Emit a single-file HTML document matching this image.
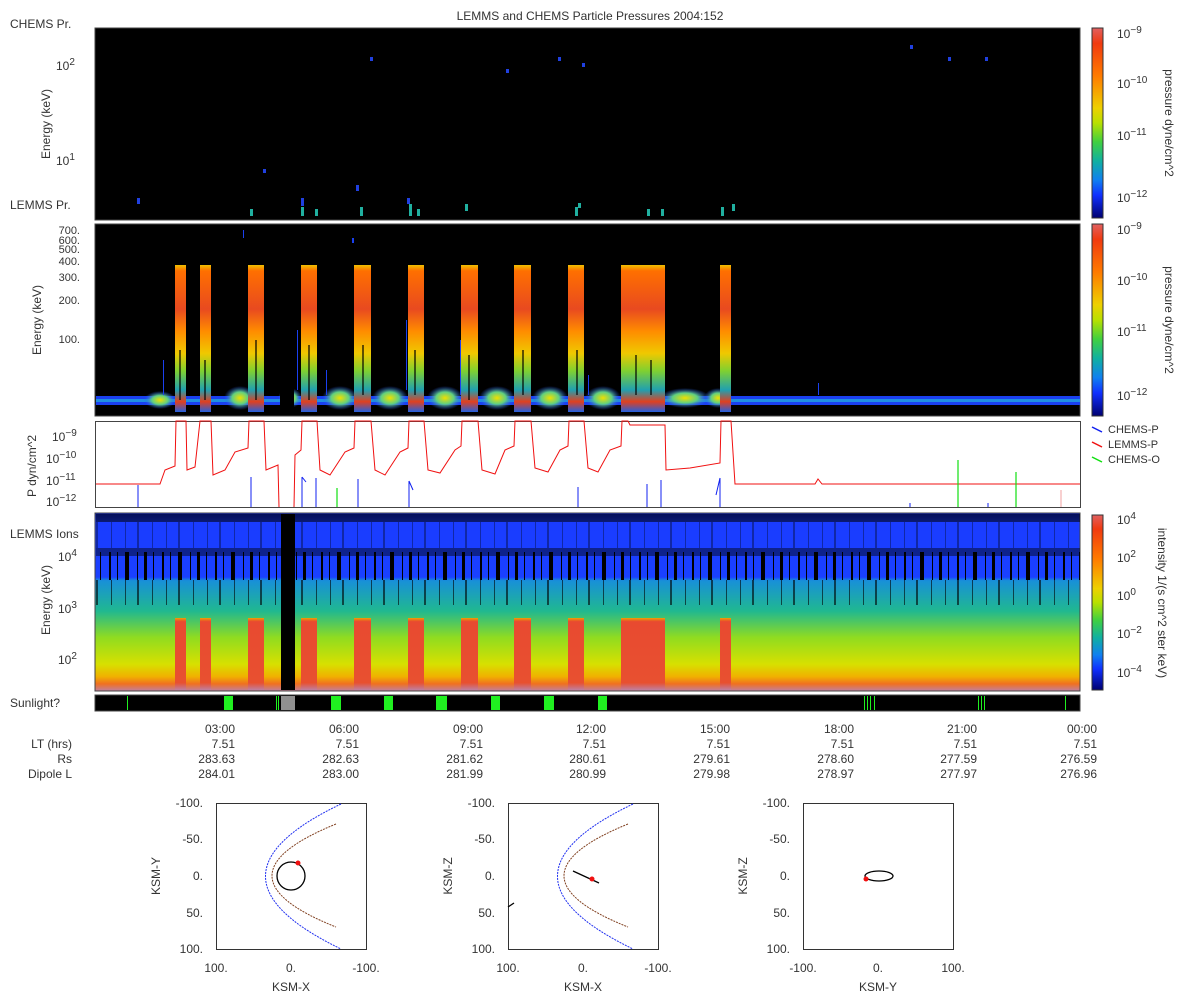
<!DOCTYPE html>
<html><head><meta charset="utf-8"><style>
html,body{margin:0;padding:0;background:#fff;width:1200px;height:1000px;overflow:hidden}
svg{display:block;font-family:"Liberation Sans",sans-serif;}
</style></head><body>
<svg width="1200" height="1000" viewBox="0 0 1200 1000" xmlns="http://www.w3.org/2000/svg">
<defs>
<linearGradient id="cb" x1="0" y1="0" x2="0" y2="1">
<stop offset="0" stop-color="#e06060"/><stop offset="0.08" stop-color="#f03a10"/>
<stop offset="0.25" stop-color="#ff7a00"/><stop offset="0.42" stop-color="#eed000"/>
<stop offset="0.5" stop-color="#b8e000"/><stop offset="0.6" stop-color="#40d040"/>
<stop offset="0.7" stop-color="#10b0a0"/><stop offset="0.8" stop-color="#1080f0"/>
<stop offset="0.88" stop-color="#1030ff"/><stop offset="1" stop-color="#000070"/>
</linearGradient>
<linearGradient id="burst" x1="0" y1="0" x2="0" y2="1">
<stop offset="0" stop-color="#f0c000"/><stop offset="0.04" stop-color="#ff7000"/>
<stop offset="0.3" stop-color="#e84a20"/><stop offset="0.45" stop-color="#ff8c00"/>
<stop offset="0.6" stop-color="#f0c800"/><stop offset="0.72" stop-color="#80d030"/>
<stop offset="0.85" stop-color="#20a0b0"/><stop offset="0.93" stop-color="#e04020"/>
<stop offset="1" stop-color="#2060e0"/>
</linearGradient>
<linearGradient id="p4" x1="0" y1="0" x2="0" y2="1">
<stop offset="0" stop-color="#0a20c0"/><stop offset="0.05" stop-color="#1a3cff"/>
<stop offset="0.36" stop-color="#1a40ff"/><stop offset="0.38" stop-color="#1890d8"/>
<stop offset="0.55" stop-color="#20b890"/><stop offset="0.7" stop-color="#90dc20"/>
<stop offset="0.85" stop-color="#d8e000"/><stop offset="0.92" stop-color="#f0b000"/>
<stop offset="0.96" stop-color="#f07020"/><stop offset="1" stop-color="#c080a0"/>
</linearGradient>
<linearGradient id="p4b" x1="0" y1="0" x2="0" y2="1">
<stop offset="0" stop-color="#f0a000"/><stop offset="0.05" stop-color="#e84a30"/>
<stop offset="0.9" stop-color="#e85030"/><stop offset="1" stop-color="#c080a0"/>
</linearGradient>
<radialGradient id="blob"><stop offset="0" stop-color="#f0e000"/><stop offset="0.5" stop-color="#60d080"/><stop offset="1" stop-color="#2050ff" stop-opacity="0"/></radialGradient>
<pattern id="streak" width="53" height="10" patternUnits="userSpaceOnUse">
<rect x="3" width="2" height="10" fill="#000"/><rect x="11" width="1" height="10" fill="#000"/><rect x="19" width="4" height="10" fill="#000"/><rect x="31" width="1" height="10" fill="#000"/><rect x="38" width="3" height="10" fill="#000"/><rect x="47" width="1" height="10" fill="#000"/>
</pattern>
<pattern id="streak2" width="41" height="10" patternUnits="userSpaceOnUse">
<rect x="2" width="1" height="10" fill="#000"/><rect x="14" width="2" height="10" fill="#000"/><rect x="29" width="1" height="10" fill="#000"/>
</pattern>
</defs>

<text x="590" y="20" font-size="12" text-anchor="middle" fill="#333">LEMMS and CHEMS Particle Pressures  2004:152</text>

<!-- Panel 1 -->
<rect x="95" y="28" width="985" height="192" fill="#000" stroke="#444"/>
<g fill="#2040e0">
<rect x="370" y="57" width="3" height="4"/><rect x="506" y="69" width="3" height="4"/><rect x="558" y="57" width="3" height="4"/><rect x="582" y="63" width="3" height="4"/><rect x="910" y="45" width="3" height="4"/><rect x="948" y="57" width="3" height="4"/><rect x="985" y="57" width="3" height="4"/><rect x="263" y="169" width="3" height="4"/><rect x="137" y="198" width="3" height="6"/><rect x="356" y="185" width="3" height="6"/><rect x="407" y="198" width="3" height="6"/><rect x="301" y="198" width="3" height="8"/>
</g>
<g fill="#20b0a0">
<rect x="250" y="209" width="3" height="7"/><rect x="301" y="207" width="3" height="9"/><rect x="315" y="209" width="3" height="7"/><rect x="360" y="207" width="3" height="9"/><rect x="409" y="204" width="3" height="12"/><rect x="417" y="209" width="3" height="7"/><rect x="465" y="204" width="3" height="7"/><rect x="575" y="207" width="3" height="9"/><rect x="647" y="209" width="3" height="7"/><rect x="661" y="209" width="3" height="7"/><rect x="721" y="207" width="3" height="9"/><rect x="732" y="204" width="3" height="7"/><rect x="578" y="203" width="3" height="5"/>
</g>
<text x="10" y="28" font-size="12" fill="#333">CHEMS Pr.</text>
<text x="10" y="209" font-size="12" fill="#333">LEMMS Pr.</text>
<text x="56" y="70" font-size="12" fill="#333">10<tspan dy="-5" font-size="10">2</tspan></text>
<text x="56" y="165" font-size="12" fill="#333">10<tspan dy="-5" font-size="10">1</tspan></text>
<text transform="translate(50,124) rotate(-90)" font-size="12" text-anchor="middle" fill="#333">Energy (keV)</text>

<!-- Panel 2 -->
<rect x="95" y="224" width="985" height="192" fill="#000" stroke="#444"/>
<rect x="96" y="396" width="984" height="9" fill="#1a40f0"/>
<rect x="96" y="399" width="984" height="3" fill="#2090e0"/>
<g fill="url(#blob)">
<ellipse cx="160" cy="400" rx="16" ry="9"/><ellipse cx="240" cy="398" rx="16" ry="12"/><ellipse cx="290" cy="398" rx="12" ry="10"/><ellipse cx="340" cy="398" rx="18" ry="12"/><ellipse cx="390" cy="398" rx="18" ry="12"/><ellipse cx="445" cy="398" rx="18" ry="12"/><ellipse cx="497" cy="398" rx="18" ry="12"/><ellipse cx="550" cy="398" rx="18" ry="12"/><ellipse cx="603" cy="398" rx="18" ry="12"/><ellipse cx="685" cy="398" rx="25" ry="10"/><ellipse cx="718" cy="398" rx="14" ry="10"/>
</g>
<rect x="280" y="380" width="14" height="35" fill="#000"/>
<g fill="url(#burst)">
<rect x="175" y="265" width="11" height="147"/><rect x="200" y="265" width="11" height="147"/><rect x="248" y="265" width="16" height="147"/><rect x="301" y="265" width="16" height="147"/><rect x="354" y="265" width="17" height="147"/><rect x="408" y="265" width="16" height="147"/><rect x="461" y="265" width="17" height="147"/><rect x="514" y="265" width="17" height="147"/><rect x="568" y="265" width="16" height="147"/><rect x="621" y="265" width="44" height="147"/><rect x="720" y="265" width="11" height="147"/>
</g>
<g fill="#000" opacity="0.6">
<rect x="179" y="350" width="2" height="50"/><rect x="204" y="360" width="2" height="40"/><rect x="255" y="340" width="2" height="60"/><rect x="308" y="345" width="2" height="55"/><rect x="362" y="345" width="2" height="50"/><rect x="414" y="350" width="2" height="45"/><rect x="468" y="355" width="2" height="45"/><rect x="522" y="350" width="2" height="45"/><rect x="576" y="350" width="2" height="45"/><rect x="635" y="355" width="2" height="40"/><rect x="650" y="360" width="2" height="35"/>
</g>
<g fill="#1a40f0">
<rect x="163" y="360" width="1" height="35"/><rect x="243" y="230" width="1" height="8"/><rect x="297" y="330" width="1" height="60"/><rect x="326" y="370" width="1" height="25"/><rect x="406" y="320" width="1" height="70"/><rect x="460" y="340" width="1" height="55"/><rect x="588" y="375" width="1" height="20"/><rect x="818" y="383" width="1" height="12"/><rect x="352" y="238" width="2" height="5"/>
</g>
<g font-size="11" fill="#333" text-anchor="end">
<text x="80" y="234">700.</text><text x="80" y="244">600.</text><text x="80" y="253">500.</text><text x="80" y="265">400.</text><text x="80" y="281">300.</text><text x="80" y="304">200.</text><text x="80" y="343">100.</text>
</g>
<text transform="translate(41,320) rotate(-90)" font-size="12" text-anchor="middle" fill="#333">Energy (keV)</text>

<!-- Panel 3 -->
<rect x="95.5" y="421.5" width="985" height="86" fill="#fff" stroke="#444"/>
<polyline fill="none" stroke="#f01010" stroke-width="1" points="96,484 160,484 165,470 175,466 176,421 186,421 187,470 195,467 200,421 211,421 213,475 225,470 235,452 248,448 249,421 264,421 266,470 278,465 279,507"/>
<polyline fill="none" stroke="#f01010" stroke-width="1" points="294,507 295,455 301,450 302,421 317,421 320,470 330,475 345,452 354,448 355,421 371,421 375,470 385,475 400,452 408,448 409,421 424,421 428,470 440,473 455,450 461,446 462,421 478,421 482,470 495,474 505,450 514,446 515,421 531,421 535,468 548,472 560,450 568,446 569,421 584,421 588,468 598,472 610,450 621,446 622,421 628,421 630,425 665,425 666,470 690,468 720,463 721,421 731,421 735,484 815,484 818,479 822,484 1080,484"/>
<g stroke="#1020f0" stroke-width="1">
<line x1="138" y1="485" x2="138" y2="507"/><line x1="251" y1="477" x2="251" y2="507"/><line x1="302" y1="477" x2="302" y2="507"/><line x1="302" y1="477" x2="306" y2="482"/><line x1="316" y1="478" x2="316" y2="507"/><line x1="358" y1="479" x2="358" y2="507"/><line x1="409" y1="481" x2="409" y2="507"/><line x1="409" y1="481" x2="413" y2="490"/><line x1="578" y1="487" x2="578" y2="507"/><line x1="647" y1="484" x2="647" y2="507"/><line x1="661" y1="480" x2="661" y2="507"/><line x1="720" y1="478" x2="720" y2="507"/><line x1="720" y1="478" x2="716" y2="495"/><line x1="910" y1="503" x2="910" y2="507"/><line x1="988" y1="503" x2="988" y2="507"/>
</g>
<g stroke="#10e010" stroke-width="1.2">
<line x1="337" y1="488" x2="337" y2="507"/><line x1="958" y1="460" x2="958" y2="507"/><line x1="1016" y1="472" x2="1016" y2="507"/>
</g>
<line x1="1061" y1="490" x2="1061" y2="507" stroke="#f0a0a0"/>
<text x="52" y="441" font-size="12" fill="#333">10<tspan dy="-5" font-size="10">−9</tspan></text>
<text x="46" y="463" font-size="12" fill="#333">10<tspan dy="-5" font-size="10">−10</tspan></text>
<text x="46" y="485" font-size="12" fill="#333">10<tspan dy="-5" font-size="10">−11</tspan></text>
<text x="46" y="506" font-size="12" fill="#333">10<tspan dy="-5" font-size="10">−12</tspan></text>
<text transform="translate(36,466) rotate(-90)" font-size="12" text-anchor="middle" fill="#333">P dyn/cm^2</text>
<g font-size="11" fill="#333">
<line x1="1092" y1="427" x2="1102" y2="432" stroke="#1020f0" stroke-width="1.5"/><text x="1108" y="433">CHEMS-P</text>
<line x1="1092" y1="442" x2="1102" y2="447" stroke="#f01010" stroke-width="1.5"/><text x="1108" y="448">LEMMS-P</text>
<line x1="1092" y1="457" x2="1102" y2="462" stroke="#10e010" stroke-width="1.5"/><text x="1108" y="463">CHEMS-O</text>
</g>

<!-- Panel 4 -->
<rect x="95" y="513" width="985" height="178" fill="url(#p4)" stroke="#444"/>
<rect x="96" y="514" width="984" height="8" fill="#000" opacity="0.55"/>
<rect x="96" y="552" width="984" height="28" fill="url(#streak)"/>
<rect x="96" y="548" width="984" height="8" fill="#000" opacity="0.45"/>
<rect x="96" y="580" width="984" height="25" fill="url(#streak2)" opacity="0.6"/>
<rect x="96" y="522" width="984" height="26" fill="url(#streak2)" opacity="0.35"/>
<g fill="url(#p4b)">
<rect x="175" y="618" width="11" height="72"/><rect x="200" y="618" width="11" height="72"/><rect x="248" y="618" width="16" height="72"/><rect x="301" y="618" width="16" height="72"/><rect x="354" y="618" width="17" height="72"/><rect x="408" y="618" width="16" height="72"/><rect x="461" y="618" width="17" height="72"/><rect x="514" y="618" width="17" height="72"/><rect x="568" y="618" width="16" height="72"/><rect x="621" y="618" width="44" height="72"/><rect x="720" y="618" width="11" height="72"/>
</g>
<rect x="281" y="514" width="14" height="176" fill="#000"/>
<text x="10" y="538" font-size="12" fill="#333">LEMMS Ions</text>
<text x="58" y="561" font-size="12" fill="#333">10<tspan dy="-5" font-size="10">4</tspan></text>
<text x="58" y="613" font-size="12" fill="#333">10<tspan dy="-5" font-size="10">3</tspan></text>
<text x="58" y="664" font-size="12" fill="#333">10<tspan dy="-5" font-size="10">2</tspan></text>
<text transform="translate(50,600) rotate(-90)" font-size="12" text-anchor="middle" fill="#333">Energy (keV)</text>

<!-- Sunlight -->
<rect x="95" y="695" width="985" height="16" fill="#000" stroke="#444"/>
<g fill="#20f020">
<rect x="224" y="696" width="9" height="14"/><rect x="331" y="696" width="10" height="14"/><rect x="384" y="696" width="9" height="14"/><rect x="436" y="696" width="11" height="14"/><rect x="491" y="696" width="9" height="14"/><rect x="544" y="696" width="10" height="14"/><rect x="598" y="696" width="9" height="14"/>
<rect x="127" y="696" width="1" height="14"/><rect x="276" y="696" width="1" height="14"/><rect x="278" y="696" width="1" height="14"/><rect x="864" y="696" width="1" height="14"/><rect x="867" y="696" width="1" height="14"/><rect x="870" y="696" width="1" height="14"/><rect x="874" y="696" width="1" height="14"/><rect x="978" y="696" width="1" height="14"/><rect x="981" y="696" width="1" height="14"/><rect x="984" y="696" width="1" height="14"/><rect x="1065" y="696" width="1" height="14"/>
</g>
<rect x="281" y="696" width="14" height="14" fill="#909090"/>
<text x="10" y="707" font-size="12" fill="#333">Sunlight?</text>

<!-- Colorbars -->
<rect x="1092" y="28" width="11" height="190" fill="url(#cb)" stroke="#333"/>
<rect x="1092" y="224" width="11" height="192" fill="url(#cb)" stroke="#333"/>
<rect x="1092" y="515" width="11" height="175" fill="url(#cb)" stroke="#333"/>
<g font-size="12" fill="#333">
<text x="1117" y="38">10<tspan dy="-5" font-size="10">−9</tspan></text>
<text x="1117" y="88">10<tspan dy="-5" font-size="10">−10</tspan></text>
<text x="1117" y="140">10<tspan dy="-5" font-size="10">−11</tspan></text>
<text x="1117" y="202">10<tspan dy="-5" font-size="10">−12</tspan></text>
<text x="1117" y="234">10<tspan dy="-5" font-size="10">−9</tspan></text>
<text x="1117" y="285">10<tspan dy="-5" font-size="10">−10</tspan></text>
<text x="1117" y="336">10<tspan dy="-5" font-size="10">−11</tspan></text>
<text x="1117" y="400">10<tspan dy="-5" font-size="10">−12</tspan></text>
<text x="1117" y="524">10<tspan dy="-5" font-size="10">4</tspan></text>
<text x="1117" y="562">10<tspan dy="-5" font-size="10">2</tspan></text>
<text x="1117" y="600">10<tspan dy="-5" font-size="10">0</tspan></text>
<text x="1117" y="638">10<tspan dy="-5" font-size="10">−2</tspan></text>
<text x="1117" y="677">10<tspan dy="-5" font-size="10">−4</tspan></text>
<text transform="translate(1165,123) rotate(90)" text-anchor="middle">pressure dyne/cm^2</text>
<text transform="translate(1165,320) rotate(90)" text-anchor="middle">pressure dyne/cm^2</text>
<text transform="translate(1158,603) rotate(90)" text-anchor="middle">intensity 1/(s cm^2 ster keV)</text>
</g>

<!-- Time axis -->
<g font-size="12" fill="#333" text-anchor="end">
<text x="235" y="733">03:00</text><text x="359" y="733">06:00</text><text x="483" y="733">09:00</text><text x="606" y="733">12:00</text><text x="730" y="733">15:00</text><text x="854" y="733">18:00</text><text x="977" y="733">21:00</text><text x="1097" y="733">00:00</text>
<text x="72" y="748">LT (hrs)</text><text x="72" y="763">Rs</text><text x="72" y="778">Dipole L</text>
<text x="235" y="748">7.51</text><text x="359" y="748">7.51</text><text x="483" y="748">7.51</text><text x="606" y="748">7.51</text><text x="730" y="748">7.51</text><text x="854" y="748">7.51</text><text x="977" y="748">7.51</text><text x="1097" y="748">7.51</text>
<text x="235" y="763">283.63</text><text x="359" y="763">282.63</text><text x="483" y="763">281.62</text><text x="606" y="763">280.61</text><text x="730" y="763">279.61</text><text x="854" y="763">278.60</text><text x="977" y="763">277.59</text><text x="1097" y="763">276.59</text>
<text x="235" y="778">284.01</text><text x="359" y="778">283.00</text><text x="483" y="778">281.99</text><text x="606" y="778">280.99</text><text x="730" y="778">279.98</text><text x="854" y="778">278.97</text><text x="977" y="778">277.97</text><text x="1097" y="778">276.96</text>
</g>

<!-- Orbit plots -->
<g font-size="12" fill="#333">
<rect x="216.5" y="803.5" width="150" height="146" fill="#fff" stroke="#333"/>
<path d="M341,804 Q190,876 341,949" fill="none" stroke="#2030f0" stroke-dasharray="2,1"/>
<path d="M336,824 Q208,876 336,927" fill="none" stroke="#804020" stroke-dasharray="2,1"/>
<ellipse cx="291" cy="876" rx="14" ry="14" fill="none" stroke="#000" stroke-width="1.3"/>
<circle cx="298" cy="863" r="2.5" fill="#f01010"/>
<text x="203" y="807" text-anchor="end">-100.</text><text x="203" y="843" text-anchor="end">-50.</text><text x="203" y="880" text-anchor="end">0.</text><text x="203" y="917" text-anchor="end">50.</text><text x="203" y="953" text-anchor="end">100.</text>
<text x="216" y="972" text-anchor="middle">100.</text><text x="291" y="972" text-anchor="middle">0.</text><text x="366" y="972" text-anchor="middle">-100.</text>
<text x="291" y="991" text-anchor="middle">KSM-X</text>
<text transform="translate(160,876) rotate(-90)" text-anchor="middle">KSM-Y</text>

<rect x="508.5" y="803.5" width="150" height="146" fill="#fff" stroke="#333"/>
<path d="M633,804 Q482,876 633,949" fill="none" stroke="#2030f0" stroke-dasharray="2,1"/>
<path d="M628,824 Q500,876 628,927" fill="none" stroke="#804020" stroke-dasharray="2,1"/>
<line x1="573" y1="871" x2="599" y2="883" stroke="#000" stroke-width="1.3"/>
<line x1="508" y1="907" x2="514" y2="903" stroke="#000" stroke-width="1.3"/>
<circle cx="592" cy="879" r="2.5" fill="#f01010"/>
<text x="495" y="807" text-anchor="end">-100.</text><text x="495" y="843" text-anchor="end">-50.</text><text x="495" y="880" text-anchor="end">0.</text><text x="495" y="917" text-anchor="end">50.</text><text x="495" y="953" text-anchor="end">100.</text>
<text x="508" y="972" text-anchor="middle">100.</text><text x="583" y="972" text-anchor="middle">0.</text><text x="658" y="972" text-anchor="middle">-100.</text>
<text x="583" y="991" text-anchor="middle">KSM-X</text>
<text transform="translate(452,876) rotate(-90)" text-anchor="middle">KSM-Z</text>

<rect x="803.5" y="803.5" width="150" height="146" fill="#fff" stroke="#333"/>
<ellipse cx="879" cy="876" rx="14" ry="5" fill="none" stroke="#000" stroke-width="1.3"/>
<circle cx="866" cy="879" r="2.5" fill="#f01010"/>
<text x="790" y="807" text-anchor="end">-100.</text><text x="790" y="843" text-anchor="end">-50.</text><text x="790" y="880" text-anchor="end">0.</text><text x="790" y="917" text-anchor="end">50.</text><text x="790" y="953" text-anchor="end">100.</text>
<text x="803" y="972" text-anchor="middle">-100.</text><text x="878" y="972" text-anchor="middle">0.</text><text x="953" y="972" text-anchor="middle">100.</text>
<text x="878" y="991" text-anchor="middle">KSM-Y</text>
<text transform="translate(747,876) rotate(-90)" text-anchor="middle">KSM-Z</text>
</g>
</svg>
</body></html>
